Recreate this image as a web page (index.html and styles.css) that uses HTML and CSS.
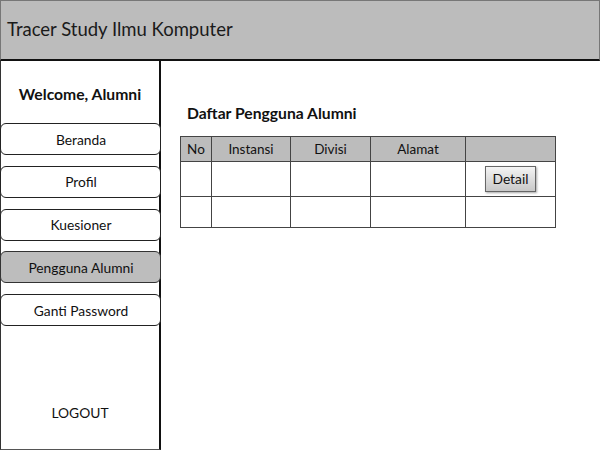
FILE: index.html
```html
<!DOCTYPE html>
<html>
<head>
<meta charset="utf-8">
<link rel="stylesheet" href="styles.css">
</head>
<body>
<div class="app">
  <header class="topbar">Tracer Study Ilmu Komputer</header>
  <div class="main">
    <aside class="sidebar">
      <div class="welcome">Welcome, Alumni</div>
      <nav class="menu">
        <div class="menu-item">Beranda</div>
        <div class="menu-item">Profil</div>
        <div class="menu-item">Kuesioner</div>
        <div class="menu-item active">Pengguna Alumni</div>
        <div class="menu-item">Ganti Password</div>
      </nav>
      <div class="logout">LOGOUT</div>
    </aside>
    <section class="content">
      <h2 class="title">Daftar Pengguna Alumni</h2>
      <table class="grid">
        <colgroup>
          <col class="c-no"><col class="c-inst"><col class="c-div"><col class="c-alm"><col class="c-act">
        </colgroup>
        <thead>
          <tr><th>No</th><th>Instansi</th><th>Divisi</th><th>Alamat</th><th></th></tr>
        </thead>
        <tbody>
          <tr class="r1"><td></td><td></td><td></td><td></td><td class="act"><span class="btn">Detail</span></td></tr>
          <tr class="r2"><td></td><td></td><td></td><td></td><td></td></tr>
        </tbody>
      </table>
    </section>
  </div>
</div>
</body>
</html>
```

FILE: styles.css
```css
* { box-sizing: border-box; }
html, body { margin: 0; padding: 0; background: #fff; }
body { font-family: Lato, "Open Sans", sans-serif; color: #111; }
.app {
  width: 600px; height: 450px;
  display: flex; flex-direction: column;
}
.topbar {
  height: 61px;
  background: #bcbcbc;
  border: 1px solid #777;
  border-bottom: 2px solid #111;
  font-size: 18.5px;
  padding: 17px 0 0 6px;
  color: #1a1a1a;
}
.main { flex: 1; display: flex; min-height: 0; }
.sidebar {
  width: 161px;
  border-left: 1px solid #333;
  border-right: 2px solid #111;
  border-bottom: 1px solid #555;
  display: flex; flex-direction: column;
}
.welcome {
  font-weight: bold;
  font-size: 15.7px;
  text-align: center;
  padding: 24px 0 0 0;
  height: 62px;
}
.menu { display: flex; flex-direction: column; gap: 10.75px; margin-left: -1px; margin-right: -2px; }
.menu-item {
  height: 32px;
  border: 1px solid #222;
  border-radius: 6px;
  background: #fff;
  font-size: 13.8px;
  display: flex; align-items: center; justify-content: center;
  padding-left: 1px;
}
.menu-item.active { background: #bdbdbd; border-color: #333; }
.logout {
  margin-top: auto;
  font-size: 13.8px;
  text-align: center;
  padding: 0 0 28px 0;
}
.content { flex: 1; padding: 0 0 0 19px; }
.title {
  margin: 43px 0 0 7px;
  font-size: 15.7px;
  font-weight: bold;
  line-height: 19px;
}
.grid {
  margin-top: 13px;
  border-collapse: collapse;
  width: 375px;
  table-layout: fixed;
  font-size: 13.5px;
}
.c-no { width: 31px; }
.c-inst { width: 79px; }
.c-div { width: 80px; }
.c-alm { width: 95px; }
.c-act { width: 90px; }
.grid th, .grid td { border: 1px solid #444; padding: 0; }
.grid th {
  background: #bcbcbc;
  font-weight: normal;
  height: 25px;
  text-align: center;
}
.grid .r1 td { height: 35px; }
.grid .r2 td { height: 31px; }
.act { text-align: center; }
.btn {
  display: inline-block;
  width: 51px; height: 26px;
  line-height: 24px;
  border: 1px solid #666;
  background: linear-gradient(#f4f4f4, #c8c8c8);
  box-shadow: 1px 1px 2px rgba(0,0,0,0.35);
  font-size: 13.8px;
  margin-left: 0;
}
```
